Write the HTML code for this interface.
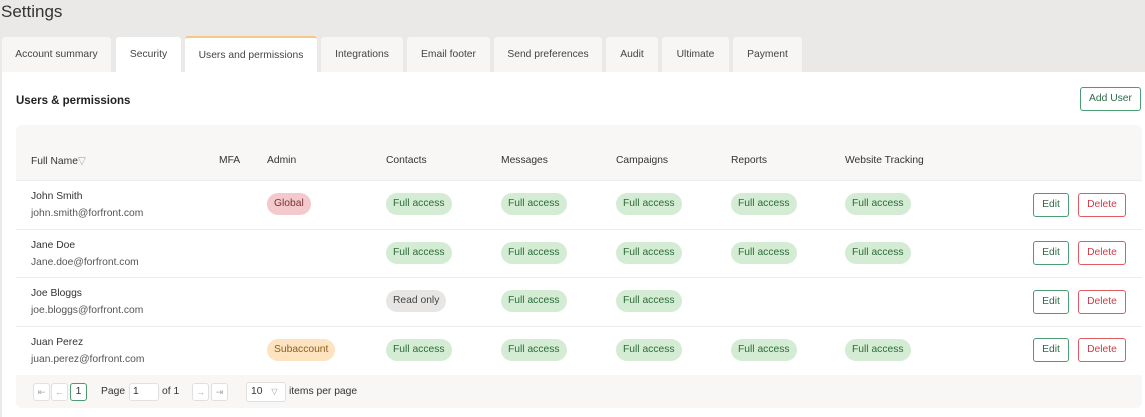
<!DOCTYPE html><html><head><style>
body{margin:0;width:1145px;height:417px;background:#ebe9e8;font-family:"Liberation Sans",sans-serif;font-size:10.3px;color:#333;position:relative;overflow:hidden}
.a{position:absolute}
.h1{left:1px;top:2px;font-size:17px;color:#333}
.tab{position:absolute;top:37px;height:35px;background:#f7f6f5;border-radius:3px 3px 0 0;line-height:35px;text-align:center;color:#444;font-size:10.3px}
.tab.on{background:#fff;border-top:2px solid #f6c785;top:36px;height:36px}
.panel{left:2px;top:72px;width:1143px;height:345px;background:#fff}
.pill{position:absolute;height:22px;line-height:22px;border-radius:11px;padding:0 7px;font-size:10.3px}
.g{background:#d3ecd3;color:#2e6b3a}
.r{background:#f3c9cb;color:#7a3036}
.o{background:#fde3c0;color:#8a6020}
.gr{background:#e8e6e4;color:#444}
.btn{position:absolute;height:22px;line-height:22px;border-radius:3px;text-align:center;font-size:10.3px;background:#fff}
.e{border:1px solid #4a9a72;color:#2e6b4a;width:34px;left:1033px}
.d{border:1px solid #e05a62;color:#d03a44;width:46px;left:1078px}
.row{position:absolute;left:16px;width:1126px;height:48px;border-top:1px solid #efedeb;background:#fff}
.nm{position:absolute;left:15px;top:7px;line-height:17px;color:#333}
.nm span{color:#555}
.th{position:absolute;top:155px;color:#333}
.pb{position:absolute;top:383px;height:16px;border:1px solid #e2e0de;border-radius:3px;background:#fff;font-size:9px;color:#aaa;text-align:center;line-height:16px}
</style></head><body>
<div class="a h1">Settings</div>
<div class="a panel"></div>
<div class="tab" style="left:2px;width:109px">Account summary</div>
<div class="tab" style="left:116px;width:65px;background:#fff">Security</div>
<div class="tab on" style="left:185px;width:132px">Users and permissions</div>
<div class="tab" style="left:321px;width:82px">Integrations</div>
<div class="tab" style="left:407px;width:83px">Email footer</div>
<div class="tab" style="left:494px;width:108px">Send preferences</div>
<div class="tab" style="left:606px;width:52px">Audit</div>
<div class="tab" style="left:662px;width:67px">Ultimate</div>
<div class="tab" style="left:733px;width:69px">Payment</div>
<div class="a" style="left:16px;top:95px;font-weight:bold;font-size:11.5px;color:#222">Users &amp; permissions</div>
<div class="btn" style="left:1080px;top:87px;width:59px;border:1px solid #4a9a72;color:#2e6b4a;height:22px">Add User</div>
<div class="a" style="left:16px;top:125px;width:1126px;height:283px;background:#f8f7f6;border-radius:6px"></div>
<div class="th" style="left:31px">Full Name<span style="color:#aaa">▽</span></div>
<div class="th" style="left:219px">MFA</div>
<div class="th" style="left:267px">Admin</div>
<div class="th" style="left:386px">Contacts</div>
<div class="th" style="left:501px">Messages</div>
<div class="th" style="left:616px">Campaigns</div>
<div class="th" style="left:731px">Reports</div>
<div class="th" style="left:845px">Website Tracking</div>

<div class="row" style="top:180px"><div class="nm">John Smith<br><span>john.smith@forfront.com</span></div></div>
<div class="row" style="top:229px"><div class="nm">Jane Doe<br><span>Jane.doe@forfront.com</span></div></div>
<div class="row" style="top:277px"><div class="nm">Joe Bloggs<br><span>joe.bloggs@forfront.com</span></div></div>
<div class="row" style="top:326px"><div class="nm">Juan Perez<br><span>juan.perez@forfront.com</span></div></div>

<div class="pill r" style="left:267px;top:193px">Global</div>
<div class="pill o" style="left:267px;top:339px">Subaccount</div>
<div class="pill gr" style="left:386px;top:290px">Read only</div>
<div class="pill g" style="left:386px;top:193px">Full access</div><div class="pill g" style="left:501px;top:193px">Full access</div><div class="pill g" style="left:616px;top:193px">Full access</div><div class="pill g" style="left:731px;top:193px">Full access</div><div class="pill g" style="left:845px;top:193px">Full access</div>
<div class="pill g" style="left:386px;top:242px">Full access</div><div class="pill g" style="left:501px;top:242px">Full access</div><div class="pill g" style="left:616px;top:242px">Full access</div><div class="pill g" style="left:731px;top:242px">Full access</div><div class="pill g" style="left:845px;top:242px">Full access</div>
<div class="pill g" style="left:501px;top:290px">Full access</div><div class="pill g" style="left:616px;top:290px">Full access</div>
<div class="pill g" style="left:386px;top:339px">Full access</div><div class="pill g" style="left:501px;top:339px">Full access</div><div class="pill g" style="left:616px;top:339px">Full access</div><div class="pill g" style="left:731px;top:339px">Full access</div><div class="pill g" style="left:845px;top:339px">Full access</div>

<div class="btn e" style="top:193px">Edit</div><div class="btn d" style="top:193px">Delete</div>
<div class="btn e" style="top:241px">Edit</div><div class="btn d" style="top:241px">Delete</div>
<div class="btn e" style="top:290px">Edit</div><div class="btn d" style="top:290px">Delete</div>
<div class="btn e" style="top:338px">Edit</div><div class="btn d" style="top:338px">Delete</div>

<div class="pb" style="left:33px;width:15px">⇤</div>
<div class="pb" style="left:51px;width:15px">←</div>
<div class="pb" style="left:70px;width:15px;border-color:#4a9a72;color:#333;font-size:10.3px">1</div>
<div class="a" style="left:101px;top:386px">Page</div>
<div class="pb" style="left:129px;color:#333;text-align:left;padding-left:3px;font-size:10.3px;width:25px">1</div>
<div class="a" style="left:162px;top:386px">of 1</div>
<div class="pb" style="left:192px;width:15px">→</div>
<div class="pb" style="left:211px;width:15px">⇥</div>
<div class="pb" style="left:246px;top:382px;height:18px;line-height:18px;color:#333;font-size:10.3px;text-align:left;padding-left:4px;width:34px">10 <span style="color:#999;font-size:8px;margin-left:6px">▽</span></div>
<div class="a" style="left:289px;top:386px">items per page</div>
</body></html>
